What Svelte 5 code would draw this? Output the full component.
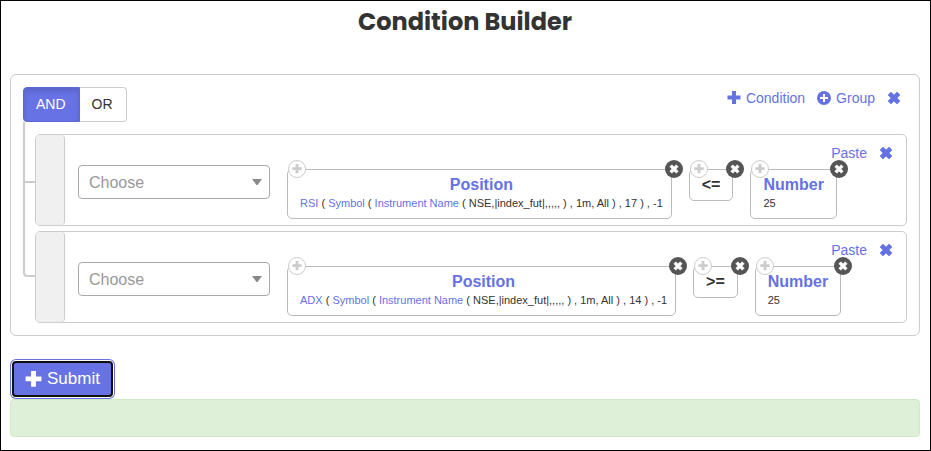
<script>
    let operator = $state("AND");
    let rules = $state([
        {
            field: "",
            items: [
                { kind: "value", title: "Position", tokens: call("RSI", 17) },
                { kind: "operator", title: "<=" },
                { kind: "number", title: "Number", value: 25 },
            ],
        },
        {
            field: "",
            items: [
                { kind: "value", title: "Position", tokens: call("ADX", 14) },
                { kind: "operator", title: ">=" },
                { kind: "number", title: "Number", value: 25 },
            ],
        },
    ]);

    function call(name, period) {
        return [
            { text: name, link: true },
            { text: " ( " },
            { text: "Symbol", link: true },
            { text: " ( " },
            { text: "Instrument Name", link: true },
            { text: ` ( NSE,|index_fut|,,,,, ) , 1m, All ) , ${period} ) , -1` },
        ];
    }

    function removeRule(index) {
        rules.splice(index, 1);
    }

    function removeItem(rule, index) {
        rule.items.splice(index, 1);
    }
</script>

{#snippet plus()}
    <svg class="icon" viewBox="0 0 14 14" aria-hidden="true">
        <path d="M5 0h4v4.500h4.500v4H9V13H5V8.500H.5v-4H5z" />
    </svg>
{/snippet}

{#snippet cross()}
    <svg class="icon" viewBox="0 0 14 14" aria-hidden="true">
        <path
            d="M4 1 7 4l3-3 3 3-3 3 3 3-3 3-3-3-3 3-3-3 3-3-3-3z"
            stroke="currentColor"
            stroke-width=".6"
            stroke-linejoin="round"
        />
    </svg>
{/snippet}

<div class="page">
    <h1>Condition Builder</h1>

    <div class="group">
        <div class="group-header">
            <div class="toggle">
                {#each ["AND", "OR"] as name}
                    <button
                        class="btn-toggle"
                        class:selected={operator === name}
                        aria-pressed={operator === name}
                        onclick={() => (operator = name)}>{name}</button
                    >
                {/each}
            </div>
            <div class="actions">
                <button class="btn-link">{@render plus()}Condition</button>
                <button class="btn-link">
                    <svg class="icon" viewBox="0 0 14 14" aria-hidden="true">
                        <path
                            fill-rule="evenodd"
                            d="M7 0a7 7 0 1 1 0 14A7 7 0 0 1 7 0zM6 3v3H3v2h3v3h2V8h3V6H8V3z"
                        />
                    </svg>Group
                </button>
                <button class="btn-link" aria-label="Remove group">
                    {@render cross()}
                </button>
            </div>
        </div>

        <div class="rules">
            {#each rules as rule, i}
                <div class="rule">
                    <div class="handle"></div>
                    <div class="rule-body">
                        <div class="rule-content">
                            <div class="field">
                                <select
                                    aria-label="Field"
                                    bind:value={rule.field}
                                >
                                    <option value="">Choose</option>
                                </select>
                                <svg class="caret" viewBox="0 0 10 6" aria-hidden="true">
                                    <path d="M0 0h10L5.500 6h-1z" />
                                </svg>
                            </div>
                            {#each rule.items as item, j}
                                <div class="item" class:value={item.kind === "value"}>
                                    <button class="badge add" aria-label="Add">
                                        {@render plus()}
                                    </button>
                                    <button
                                        class="badge remove"
                                        aria-label="Remove"
                                        onclick={() => removeItem(rule, j)}
                                    >
                                        {@render cross()}
                                    </button>
                                    {#if item.kind === "operator"}
                                        <div class="compare">{item.title}</div>
                                    {:else}
                                        <a class="title" href="#edit">{item.title}</a>
                                        {#if item.kind === "value"}
                                            <div class="params">
                                                {#each item.tokens as token}{#if token.link}<a
                                                            href="#edit">{token.text}</a
                                                        >{:else}{token.text}{/if}{/each}
                                            </div>
                                        {:else}
                                            <div class="params">{item.value}</div>
                                        {/if}
                                    {/if}
                                </div>
                            {/each}
                        </div>
                        <div class="actions">
                            <button class="btn-link">Paste</button>
                            <button
                                class="btn-link"
                                aria-label="Remove condition"
                                onclick={() => removeRule(i)}
                            >
                                {@render cross()}
                            </button>
                        </div>
                    </div>
                </div>
            {/each}
        </div>
    </div>

    <button class="btn-submit">{@render plus()}Submit</button>
    <div class="result" role="status"></div>
</div>

<style>
    :global(body) {
        background-color: #fff;
    }

    .page {
        box-sizing: border-box;
        min-height: 100vh;
        padding: 0 10px 13px 9px;
        border: 1px solid #000;
        font-family: "Liberation Sans", Arial, sans-serif;
        font-size: 14px;
        color: #333;
    }

    h1 {
        margin: 0 0 31px;
        font-family: Poppins, Inter, sans-serif;
        font-size: 24px;
        font-weight: 700;
        line-height: 42px;
        text-align: center;
    }

    button {
        margin: 0;
        font-family: inherit;
        font-size: 14px;
        cursor: pointer;
    }

    a {
        color: #6572e4;
        text-decoration: none;
    }

    .icon {
        display: block;
        flex: none;
        width: 14px;
        height: 14px;
        fill: currentColor;
    }

    .group {
        padding: 12px;
        border: 1px solid #ccc;
        border-radius: 6px;
    }

    .group-header {
        display: flex;
        justify-content: space-between;
        margin-bottom: 12px;
    }

    .toggle {
        display: flex;
    }

    .btn-toggle {
        height: 35px;
        padding: 0 13px 2px 12px;
        border: 1px solid #ccc;
        border-left: none;
        border-radius: 0 4px 4px 0;
        background-color: #fff;
        color: #333;
    }

    .btn-toggle:first-child {
        border-left: 1px solid #ccc;
        border-radius: 4px 0 0 4px;
    }

    .btn-toggle.selected {
        border-color: #5a68d8;
        background-color: #6772e5;
        color: #fff;
        box-shadow: inset 0 3px 5px rgba(0, 0, 0, 0.125);
    }

    .actions {
        display: flex;
        align-items: center;
        gap: 12px;
    }

    .btn-link {
        display: flex;
        align-items: center;
        gap: 5px;
        padding: 0;
        border: none;
        background: none;
        color: #6572e4;
        line-height: 20px;
    }

    .group-header .actions {
        align-self: flex-start;
        padding: 1px 6px 0 0;
    }

    .rules {
        display: flex;
        flex-direction: column;
        gap: 5px;
        padding-left: 12px;
    }

    .rule {
        position: relative;
        display: flex;
        border: 1px solid #ccc;
        border-radius: 5px;
    }

    .rule::before,
    .rule::after {
        content: "";
        position: absolute;
        left: -13px;
        width: 10px;
        border: 0 solid #ccc;
        border-left-width: 2px;
    }

    .rule::before {
        top: -8px;
        height: calc(50% + 6px);
        border-bottom-width: 2px;
    }

    .rule:first-child::before {
        top: -13px;
        height: calc(50% + 14px);
    }

    .rule:last-child::before {
        border-bottom-left-radius: 4px;
    }

    .rule::after {
        top: 50%;
        height: 50%;
    }

    .rule:last-child::after {
        display: none;
    }

    .handle {
        flex: none;
        width: 28px;
        border-right: 1px solid #ccc;
        border-radius: 4px;
        background-color: #f0f0f0;
    }

    .rule-body {
        display: grid;
        flex: 1;
    }

    .rule-content,
    .rule-body .actions {
        grid-area: 1 / 1;
    }

    .rule-content {
        display: flex;
        align-items: flex-start;
        padding: 34px 13px 6px;
    }

    .rule-body .actions {
        align-self: start;
        justify-self: end;
        padding: 8px 13px 0 0;
    }

    .field {
        display: grid;
        align-items: center;
        width: 192px;
        margin-top: -4px;
    }

    .field select,
    .caret {
        grid-area: 1 / 1;
    }

    .field select {
        width: 100%;
        height: 34px;
        padding: 0 10px;
        border: 1px solid #aaa;
        border-radius: 4px;
        appearance: none;
        background-color: #fff;
        color: #999;
        font-family: inherit;
        font-size: 16px;
    }

    .caret {
        justify-self: end;
        width: 10px;
        height: 6px;
        margin-right: 8px;
        fill: #888;
        pointer-events: none;
    }

    .item {
        position: relative;
        margin-left: 17px;
        padding: 6px 12px;
        border: 1px solid #bbb;
        border-radius: 5px;
    }

    .item.value {
        padding-right: 8px;
    }

    .title,
    .compare {
        display: block;
        font-size: 16px;
        font-weight: 700;
        line-height: 18px;
        text-align: center;
    }

    .params {
        font-size: 11px;
        line-height: 18px;
        white-space: nowrap;
    }

    .badge {
        position: absolute;
        top: -10px;
        display: flex;
        align-items: center;
        justify-content: center;
        box-sizing: border-box;
        width: 18px;
        height: 18px;
        padding: 0;
        border-radius: 50%;
    }

    .badge.add {
        left: 0;
        border: 1px solid #ccc;
        background-color: #fff;
        color: #ccc;
    }

    .badge.remove {
        right: -12px;
        border: none;
        background-color: #555;
        color: #fff;
    }

    .badge .icon {
        width: 10px;
        height: 10px;
    }

    .btn-submit {
        display: flex;
        align-items: center;
        gap: 5px;
        height: 36px;
        margin: 25px 0 2px 2px;
        padding: 0 11px;
        border: 2px solid #101010;
        border-radius: 4px;
        background-color: #6772e5;
        box-shadow:
            0 0 0 1px #fff,
            0 0 0 2px #6772e5;
        color: #fff;
        font-size: 17px;
    }

    .btn-submit .icon {
        width: 17px;
        height: 17px;
    }

    .result {
        height: 36px;
        border: 1px solid #d0e9c6;
        border-radius: 4px;
        background-color: #dff0d8;
    }
</style>
